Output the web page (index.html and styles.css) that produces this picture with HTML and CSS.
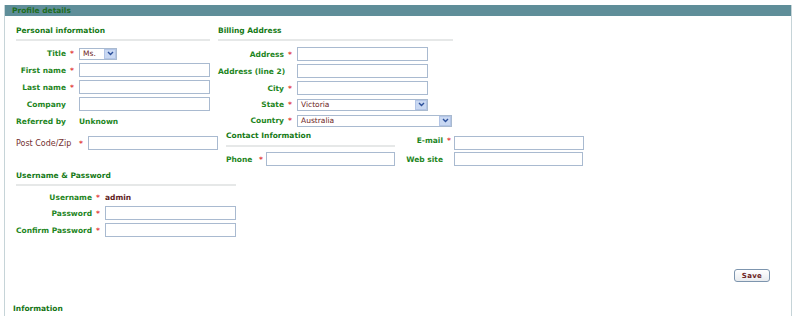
FILE: index.html
```html
<!DOCTYPE HTML>
<html>
<head>
<meta http-equiv="Content-Type" content="text/html; charset=utf-8">
<title>Profile details</title>
<link rel="stylesheet" href="styles.css">
</head>
<body>
<div class="panel">
	<div class="panel-head">Profile details</div>
	<div class="panel-body">
		<div class="row row-top">
			<div class="sec sec-personal">
				<div class="sec-title">Personal information</div>
				<div class="form form-personal">
					<label>Title</label><span class="req">*</span>
					<div class="sel sel-title"><span>Ms.</span><i class="arr"><svg width="7" height="5" viewBox="0 0 7 5"><path d="M1 1l2.5 2.5L6 1" fill="none" stroke="#2b4f9a" stroke-width="1.4"/></svg></i></div>
					<label>First name</label><span class="req">*</span><input type="text" class="txt">
					<label>Last name</label><span class="req">*</span><input type="text" class="txt">
					<label>Company</label><span></span><input type="text" class="txt">
					<label>Referred by</label><span></span><span class="val">Unknown</span>
				</div>
			</div>
			<div class="sec sec-billing">
				<div class="sec-title">Billing Address</div>
				<div class="form form-billing">
					<label>Address</label><span class="req">*</span><input type="text" class="txt">
					<label>Address (line 2)</label><span></span><input type="text" class="txt">
					<label>City</label><span class="req">*</span><input type="text" class="txt">
					<label>State</label><span class="req">*</span>
					<div class="sel sel-state"><span>Victoria</span><i class="arr"><svg width="7" height="5" viewBox="0 0 7 5"><path d="M1 1l2.5 2.5L6 1" fill="none" stroke="#2b4f9a" stroke-width="1.4"/></svg></i></div>
					<label>Country</label><span class="req">*</span>
					<div class="sel sel-country"><span>Australia</span><i class="arr"><svg width="7" height="5" viewBox="0 0 7 5"><path d="M1 1l2.5 2.5L6 1" fill="none" stroke="#2b4f9a" stroke-width="1.4"/></svg></i></div>
				</div>
			</div>
		</div>
		<div class="row row-mid">
			<div class="postcode">
				<label>Post Code/Zip</label><span class="req">*</span><input type="text" class="txt">
			</div>
			<div class="form form-contact">
				<div class="sec-title contact-title">Contact Information</div>
				<label class="lbl-r">E-mail</label><span class="req">*</span><input type="text" class="txt">
				<label>Phone</label><span class="req">*</span><input type="text" class="txt">
				<label class="lbl-r">Web site</label><span></span><input type="text" class="txt">
			</div>
		</div>
		<div class="sec sec-user">
			<div class="sec-title">Username &amp; Password</div>
			<div class="form form-user">
				<label>Username</label><span class="req">*</span><span class="val val-user">admin</span>
				<label>Password</label><span class="req">*</span><input type="password" class="txt">
				<label>Confirm Password</label><span class="req">*</span><input type="password" class="txt">
			</div>
		</div>
		<div class="actions"><button type="button" class="btn">Save</button></div>
		<div class="info">Information</div>
	</div>
</div>
</body>
</html>
```

FILE: styles.css
```css
body{ margin:5px 8px 0 4px; font-family:"DejaVu Sans",Verdana,sans-serif; font-size:7.5px; background:#fff; color:#1e861e;}
.panel{ height:311px; border-left:1px solid #c6d4d8; border-right:1px solid #c6d4d8; box-sizing:border-box;}
.panel-head{ height:11px; line-height:11px; background:#5f8e99; color:#1d6d1d; font-weight:bold; padding-left:7px;}
.panel-body{ padding:10px 21px 0 11px;}

.row{ display:flex; align-items:flex-start; gap:8px;}
.sec-title{ line-height:10px; padding-bottom:3px; border-bottom:2px solid #e6e8e8; font-weight:bold; color:#167a16; margin-bottom:6px;}

.form{ display:grid; row-gap:3px; grid-auto-rows:14px; align-items:center;}
.form label{ font-weight:bold; text-align:right; white-space:nowrap;}
.req{ color:#e23a3a; font-weight:bold; padding-left:4px;}
.val{ font-weight:bold;}

.form-personal{ grid-template-columns:50px 13px 131px; grid-template-rows:13px 14px 14px 14px 14px; margin-top:1px;}
.form-billing{ grid-template-columns:66px 13px 156px; grid-template-rows:14px 14px 14px 13px 13px;}
.sec-personal{ width:194px;}
.sec-billing{ width:235px;}

.txt{ width:131px; height:14px; box-sizing:border-box; border:1px solid #a9bad0; margin:0; padding:0; background:#fff;}

.sel{ height:12px; box-sizing:border-box; border:1px solid #a9bad0; background:#fff; display:flex; align-items:center; justify-content:space-between; color:#6d2424; padding-left:3px; font-size:7.5px;}
.sel .arr{ width:12px; height:10px; box-sizing:border-box; background:#c9d8f2; border:1px solid #b3c5e6; display:flex; align-items:center; justify-content:center;}
.sel-title{ width:38px;}
.sel-state{ width:131px;}
.sel-country{ width:155px;}

.row-mid{ margin-top:3px;}
.postcode{ display:flex; align-items:center; width:202px; margin-top:5px; color:#743030;}
.postcode label{ font-weight:normal; font-size:8px; width:59px; white-space:nowrap;}
.postcode .req{ width:9px; padding-left:4px;}
.postcode .txt{ width:130px;}

.form-contact{ grid-template-columns:29px 11px 129px 48px 11px 130px; grid-template-rows:19px 14px; row-gap:2px; column-gap:0;}
.form-contact label{ text-align:left;}
.form-contact .lbl-r{ text-align:right; padding-left:9px;}
.form-contact .txt{ width:129px;}
.form-contact .lbl-r + .req + .txt{ align-self:end; width:130px;}
.contact-title{ grid-column:1 / span 3; align-self:start; margin:0; height:10px; padding-bottom:4px;}

.sec-user{ width:220px; margin-top:5px;}
.form-user{ grid-template-columns:76px 13px 131px; grid-template-rows:11px 14px 14px;}
.val-user{ color:#5e1c1c;}

.actions{ display:flex; justify-content:flex-end; margin-top:32px;}
.btn{ width:36px; height:13px; padding:0; font-family:"DejaVu Sans",Verdana,sans-serif; font-size:7px; font-weight:bold; color:#6d2424; border:1px solid #7d95ae; border-radius:3px; background:linear-gradient(#ffffff,#e8ebef); letter-spacing:0.3px;}

.info{ margin:22px 0 0 -3px; font-weight:bold; color:#157515; line-height:10px;}
```
